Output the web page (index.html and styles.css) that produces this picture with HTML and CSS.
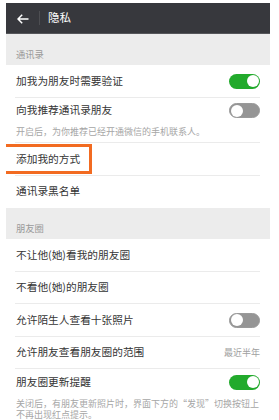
FILE: index.html
```html
<!DOCTYPE html>
<html lang="zh-CN">
<head>
<meta charset="utf-8">
<link rel="stylesheet" href="styles.css">
</head>
<body>
<div class="screen">
  <div class="topbar">
    <svg class="back" width="12" height="10" viewBox="0 0 12 10"><path d="M11.5 5H1.2M5.2 0.8L1 5l4.2 4.2" fill="none" stroke="#fff" stroke-width="1.5"/></svg>
    <span class="vsep"></span>
    <span class="title">隐私</span>
  </div>
  <div class="section">通讯录</div>
  <div class="row"><span class="label">加我为朋友时需要验证</span><span class="switch on"></span></div>
  <div class="row tall">
    <div class="line"><span class="label">向我推荐通讯录朋友</span><span class="switch off"></span></div>
    <div class="sub">开启后，为你推荐已经开通微信的手机联系人。</div>
  </div>
  <div class="row"><span class="label">添加我的方式</span><span class="mark"></span></div>
  <div class="row last"><span class="label">通讯录黑名单</span></div>
  <div class="section">朋友圈</div>
  <div class="row"><span class="label">不让他(她)看我的朋友圈</span></div>
  <div class="row"><span class="label">不看他(她)的朋友圈</span></div>
  <div class="row"><span class="label">允许陌生人查看十张照片</span><span class="switch off"></span></div>
  <div class="row"><span class="label">允许朋友查看朋友圈的范围</span><span class="value">最近半年</span></div>
  <div class="row tall last">
    <div class="line"><span class="label">朋友圈更新提醒</span><span class="switch on"></span></div>
    <div class="sub">关闭后，有朋友更新照片时，界面下方的“发现”切换按钮上<br>不再出现红点提示。</div>
  </div>
</div>
</body>
</html>
```
FILE: styles.css
```css
html, body { margin: 0; padding: 0; background: #fff; }
body { padding: 3px 9px 0 6px; font-family: "Noto Sans CJK SC", "Noto Sans", sans-serif; }
.screen { position: relative; width: 264px; background: #fff; }
.topbar { height: 31px; background: #37383d; display: flex; align-items: center; border-bottom: 1px solid #55565a; box-sizing: border-box; }
.back { margin-left: 11px; margin-top: 1px; }
.vsep { width: 1px; height: 14px; background: #4d4e52; margin-left: 10px; }
.title { color: #fff; font-size: 11.5px; margin-left: 8px; line-height: 1; }
.section { height: 31px; background: #ececec; color: #9a9a9a; font-size: 9.3px; line-height: 1; padding: 0 0 6px 10px; box-sizing: border-box; display: flex; align-items: flex-end; }
.row { position: relative; height: 32.5px; display: flex; align-items: center; justify-content: space-between; padding: 0 9px 0 10px; }
.row::after { content: ""; position: absolute; left: 9px; right: 10px; bottom: 0; height: 1px; background: #ebebeb; }
.row.last::after { display: none; }
.row.tall { height: auto; display: block; padding-top: 6px; padding-bottom: 6px; }
.line { display: flex; align-items: center; justify-content: space-between; height: 14px; }
.label { color: #353535; font-size: 10.7px; line-height: 1; }
.sub { color: #a6a6a6; font-size: 9px; line-height: 11px; margin-top: 8.5px; }
.value { color: #a0a0a0; font-size: 9px; margin-right: 1px; }
.switch { position: relative; width: 31px; height: 15px; border-radius: 8px; box-sizing: border-box; margin-right: 1px; }
.switch::before { content: ""; position: absolute; top: 1.5px; width: 12px; height: 12px; border-radius: 50%; background: #fff; }
.switch.on { background: #22aa2c; }
.switch.on::before { right: 1.5px; }
.switch.off { background: #959595; border: 1px solid #9a9a9a; }
.switch.off::before { left: 0.5px; top: 0.5px; width: 12px; height: 12px; background: #fff; }
.mark { position: absolute; left: 0; top: 1px; width: 86px; height: 30px; border: 3px solid #f26b21; border-left: none; box-sizing: border-box; }
```
